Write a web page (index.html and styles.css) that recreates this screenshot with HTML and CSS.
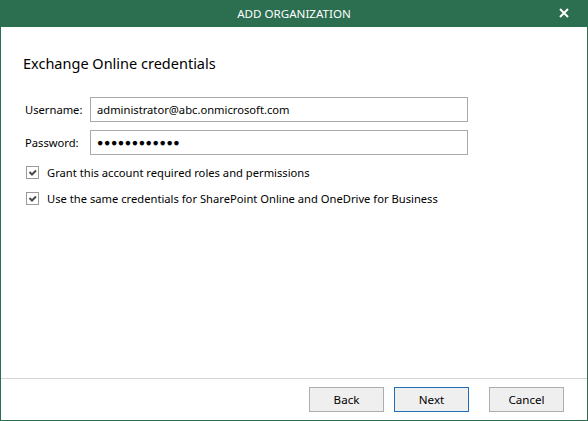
FILE: index.html
```html
<!DOCTYPE html>
<html lang="en">
<head>
    <meta charset="UTF-8">
    <title>Add Organization</title>
    <link rel="stylesheet" href="styles.css">
</head>
<body>
    <div class="window">
        <div class="titlebar">
            <span class="title">ADD ORGANIZATION</span>
            <span class="close">
                <svg width="10" height="10" viewBox="0 0 10 10"><path d="M1 1L9 9M9 1L1 9" stroke="#fff" stroke-width="2"/></svg>
            </span>
        </div>

        <div class="content">
            <h2>Exchange Online credentials</h2>

            <div class="row">
                <label>Username:</label>
                <div class="field">administrator@abc.onmicrosoft.com</div>
            </div>
            <div class="row">
                <label>Password:</label>
                <div class="field dots">&#9679;&#9679;&#9679;&#9679;&#9679;&#9679;&#9679;&#9679;&#9679;&#9679;&#9679;&#9679;</div>
            </div>

            <div class="check first">
                <span class="box"><svg width="11" height="11" viewBox="0 0 11 11"><path d="M2.5 5L5 7.5L9 3.5" fill="none" stroke="#4a4a4a" stroke-width="2"/></svg></span>
                Grant this account required roles and permissions
            </div>
            <div class="check">
                <span class="box"><svg width="11" height="11" viewBox="0 0 11 11"><path d="M2.5 5L5 7.5L9 3.5" fill="none" stroke="#4a4a4a" stroke-width="2"/></svg></span>
                Use the same credentials for SharePoint Online and OneDrive for Business
            </div>
        </div>

        <div class="footer">
            <button>Back</button>
            <button class="primary">Next</button>
            <button class="cancel">Cancel</button>
        </div>
    </div>
</body>
</html>
```

FILE: styles.css
```css
body {
    margin: 0;
    font-family: "Noto Sans", "Open Sans", sans-serif;
    font-size: 11.2px;
    color: #000;
    background: #fff;
}
.window {
    width: 588px;
    height: 421px;
    box-sizing: border-box;
    border: 1px solid #2b6e50;
    border-top: none;
    display: flex;
    flex-direction: column;
}
.titlebar {
    height: 27px;
    background-color: #2b6e50;
    color: #fff;
    position: relative;
    display: flex;
    align-items: center;
    justify-content: center;
    margin: 0 -1px;
}
.title {
    font-size: 11.6px;
}
.close {
    position: absolute;
    right: 19px;
    top: 8px;
    line-height: 0;
}
.content {
    flex: 1;
    padding: 26px 0 0 22px;
}
h2 {
    font-weight: normal;
    font-size: 14.5px;
    margin: 0 0 24px 0;
}
.row {
    display: flex;
    align-items: center;
    margin-bottom: 8px;
}
.row label {
    width: 65px;
    padding-left: 2px;
}
.field {
    width: 370px;
    height: 23px;
    border: 1px solid #a9a9a9;
    padding-left: 6px;
    line-height: 23px;
}
.dots {
    font-size: 10.5px;
    letter-spacing: 0.6px;
}
.check {
    display: flex;
    align-items: center;
    height: 26px;
    margin-left: 3px;
}
.check.first {
    margin-top: -4px;
}
.box {
    width: 11px;
    height: 11px;
    border: 1px solid #9a9a9a;
    margin-right: 8px;
    line-height: 0;
}
.footer {
    height: 41px;
    border-top: 1px solid #d4d4d4;
    display: flex;
    align-items: center;
    justify-content: flex-end;
    padding-right: 23px;
}
.footer button {
    width: 75px;
    height: 25px;
    background-color: #efefef;
    border: 1px solid #adadad;
    font-family: inherit;
    font-size: 11.6px;
    margin-left: 10px;
    padding: 0;
}
.footer button.primary {
    border-color: #1e6fb5;
}
.footer button.cancel {
    margin-left: 20px;
}
```
